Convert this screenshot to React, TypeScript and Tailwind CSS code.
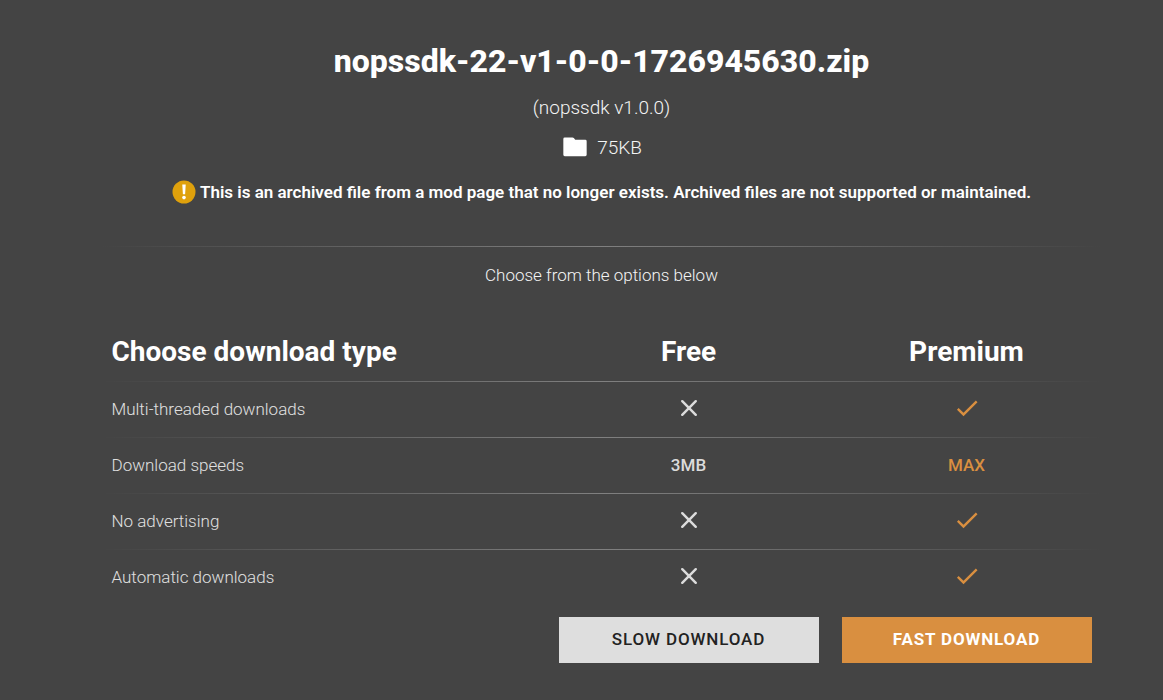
import type { ReactNode } from 'react';

type Row = {
  label: string;
  free: ReactNode;
  premium: ReactNode;
};

const CrossIcon = () => (
  <svg viewBox="0 0 24 24" className="mx-auto mb-1 block size-7" role="img" aria-label="Not included">
    <path d="M6.2 6.2 17.8 17.8M17.8 6.2 6.2 17.8" fill="none" stroke="#dcdcdc" strokeWidth="2.1" strokeLinecap="round" />
  </svg>
);

const CheckIcon = () => (
  <svg viewBox="0 0 24 24" className="mx-auto mb-1 block size-7" role="img" aria-label="Included">
    <path d="M9 16.17 4.83 12l-1.42 1.41L9 19 21 7l-1.41-1.41L9 16.17Z" fill="#d98f40" />
  </svg>
);

const rows: Row[] = [
  { label: 'Multi-threaded downloads', free: <CrossIcon />, premium: <CheckIcon /> },
  { label: 'Download speeds', free: '3MB', premium: 'MAX' },
  { label: 'No advertising', free: <CrossIcon />, premium: <CheckIcon /> },
  { label: 'Automatic downloads', free: <CrossIcon />, premium: <CheckIcon /> },
];

export default function App() {
  return (
    <main className="min-h-screen bg-[#444444] pt-10 pb-9 pl-10 text-[#f4f4f4] font-[Roboto,sans-serif]">
      <div className="mx-auto max-w-[1000px]">
        <header className="flex flex-col items-center text-center">
          <h1 className="text-[32px] leading-[42px] font-extrabold text-white">
            nopssdk-22-v1-0-0-1726945630.zip
          </h1>
          <p className="mt-3 text-[19px] leading-7 font-light">(nopssdk v1.0.0)</p>
          <p className="mt-3 flex items-center gap-2 text-[19px] leading-7 font-light">
            <svg viewBox="0 0 24 24" className="size-7 fill-white" aria-hidden="true">
              <path d="M9.8 3H3.2A1.2 1.2 0 0 0 2 4.2v13.6A1.2 1.2 0 0 0 3.2 19h17.6a1.2 1.2 0 0 0 1.2-1.2V6.2A1.2 1.2 0 0 0 20.8 5h-8.6L11 3.5A1.6 1.6 0 0 0 9.8 3Z" />
            </svg>
            75KB
          </p>
          <p className="mt-4 flex items-center gap-1 text-[17px] leading-7 font-semibold text-white">
            <svg viewBox="0 0 24 24" className="size-6" aria-hidden="true">
              <circle cx="12" cy="12" r="11.5" fill="#dfa10c" />
              <path d="M10.3 4.5h3.4l-.6 9.8h-2.2Z" fill="#fff" />
              <circle cx="12" cy="17.6" r="1.8" fill="#fff" />
            </svg>
            This is an archived file from a mod page that no longer exists. Archived files are not supported or maintained.
          </p>
        </header>

        <div className="mt-10 h-px bg-[linear-gradient(to_right,transparent,#808080,transparent)]" />
        <p className="mt-4 text-center text-[17px] leading-6 font-light">Choose from the options below</p>

        <table className="mt-9 w-full table-fixed">
          <thead>
            <tr className="h-[58px] text-[28px] font-bold text-white">
              <th scope="col" className="pl-[10px] text-left">Choose download type</th>
              <th scope="col" className="w-[286px]">Free</th>
              <th scope="col" className="w-[270px]">Premium</th>
            </tr>
          </thead>
          <tbody>
            {rows.map((row) => (
              <tr
                key={row.label}
                className="h-14 bg-[linear-gradient(to_right,transparent,#808080,transparent)] bg-[length:100%_1px] bg-top bg-no-repeat text-[17px]"
              >
                <th scope="row" className="pt-[2px] pl-[10px] text-left font-light text-[#e0e0e0]">{row.label}</th>
                <td className="pt-[2px] text-center font-medium text-[#dcdcdc]">{row.free}</td>
                <td className="pt-[2px] text-center font-medium text-[#d98f40]">{row.premium}</td>
              </tr>
            ))}
          </tbody>
          <tfoot>
            <tr>
              <td />
              <td className="px-[13px] pt-3">
                <button
                  type="button"
                  className="h-[46px] w-full bg-[#dedede] text-[17px] font-medium tracking-wider text-[#222222] uppercase hover:bg-white"
                >
                  Slow download
                </button>
              </td>
              <td className="px-[10px] pt-3">
                <button
                  type="button"
                  className="h-[46px] w-full bg-[#d98f40] text-[17px] font-bold tracking-wider text-white uppercase hover:bg-[#e39c50]"
                >
                  Fast download
                </button>
              </td>
            </tr>
          </tfoot>
        </table>
      </div>
    </main>
  );
}
